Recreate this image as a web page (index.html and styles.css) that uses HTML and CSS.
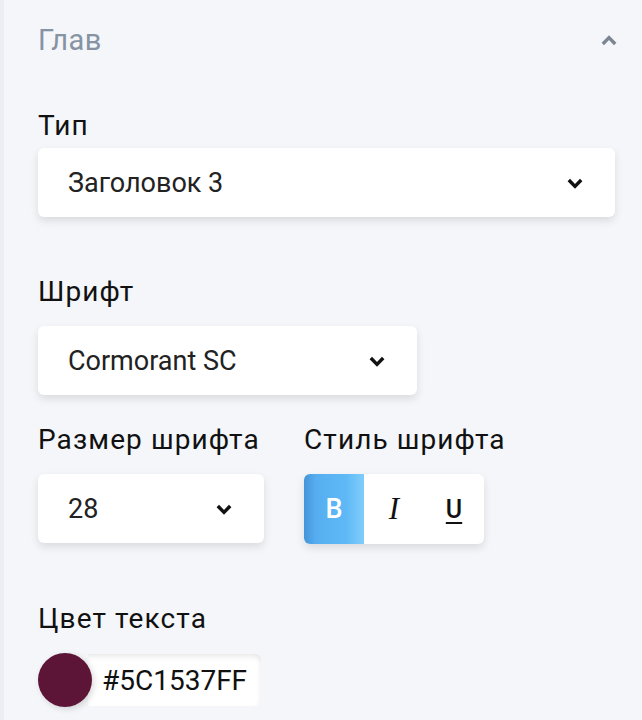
FILE: index.html
```html
<!DOCTYPE html>
<html lang="ru">
<head>
<meta charset="utf-8">
<link rel="stylesheet" href="styles.css">
</head>
<body>
<div class="panel">
  <div class="header">
    <span class="title">Глав</span>
    <svg class="up" width="16" height="11" viewBox="0 0 16 11"><path d="M1.8 9 L8 2.6 L14.2 9" fill="none" stroke="#7d8693" stroke-width="3.4"/></svg>
  </div>

  <div class="field f-type">
    <div class="label tight">Тип</div>
    <div class="select wide">
      <span>Заголовок 3</span>
      <svg class="chev" width="16" height="11" viewBox="0 0 16 11"><path d="M1.8 2 L8 8.4 L14.2 2" fill="none" stroke="#111" stroke-width="3.4"/></svg>
    </div>
  </div>

  <div class="field f-font">
    <div class="label">Шрифт</div>
    <div class="select mid">
      <span>Cormorant SC</span>
      <svg class="chev" width="16" height="11" viewBox="0 0 16 11"><path d="M1.8 2 L8 8.4 L14.2 2" fill="none" stroke="#111" stroke-width="3.4"/></svg>
    </div>
  </div>

  <div class="row">
    <div class="field">
      <div class="label">Размер шрифта</div>
      <div class="select small">
        <span>28</span>
        <svg class="chev" width="16" height="11" viewBox="0 0 16 11"><path d="M1.8 2 L8 8.4 L14.2 2" fill="none" stroke="#111" stroke-width="3.4"/></svg>
      </div>
    </div>
    <div class="field">
      <div class="label">Стиль шрифта</div>
      <div class="styles">
        <div class="sbtn bold active">B</div>
        <div class="sbtn italic">I</div>
        <div class="sbtn under">U</div>
      </div>
    </div>
  </div>

  <div class="field f-color">
    <div class="label">Цвет текста</div>
    <div class="color">
      <div class="swatch"></div>
      <div class="hex">#5C1537FF</div>
    </div>
  </div>
</div>
</body>
</html>
```

FILE: styles.css
```css
html, body {
  margin: 0;
  padding: 0;
  background: #f4f6fa;
  font-family: Roboto, "Noto Sans", sans-serif;
}
body {
  height: 720px;
  overflow: hidden;
  border-left: 4px solid #eceef3;
  box-sizing: border-box;
}
.panel {
  padding: 0 25px 0 34px;
}
.header {
  height: 80px;
  display: flex;
  align-items: center;
  justify-content: space-between;
}
.title {
  font-size: 29px;
  line-height: 32px;
  letter-spacing: 0.5px;
  color: #8593a3;
  margin-top: -1px;
}
.up {
  flex-shrink: 0;
  margin-right: 0;
}
.field {
  display: flex;
  flex-direction: column;
}
.label {
  font-size: 28px;
  line-height: 32px;
  color: #111;
  letter-spacing: 1.1px;
  margin-bottom: 18px;
}
.label.tight {
  margin-bottom: 6px;
}
.f-type { margin-top: 30px; }
.f-font { margin-top: 59px; }
.row {
  display: flex;
  gap: 40px;
  margin-top: 29px;
}
.f-color { margin-top: 59px; }
.select {
  height: 69px;
  background: #fff;
  border-radius: 6px;
  box-shadow: 0 4px 8px rgba(0, 0, 0, 0.11);
  display: flex;
  align-items: center;
  justify-content: space-between;
  padding: 0 32px 0 30px;
  box-sizing: border-box;
  font-size: 27px;
  color: #222;
}
.chev {
  flex-shrink: 0;
  margin-top: 2px;
}
.wide { width: 577px; }
.mid { width: 379px; }
.small { width: 226px; }
.styles {
  display: flex;
  width: 180px;
  height: 70px;
  background: #fff;
  border-radius: 6px;
  box-shadow: 0 4px 8px rgba(0, 0, 0, 0.11);
  overflow: hidden;
}
.sbtn {
  width: 60px;
  display: flex;
  align-items: center;
  justify-content: center;
  font-size: 26px;
  color: #111;
}
.bold {
  font-weight: 500;
  font-size: 27px;
}
.active {
  background: linear-gradient(90deg, #4594d8 0%, #56aef0 20%, #5fb9f6 70%, #80cdfb 100%);
  color: #fff;
}
.italic {
  font-family: "Liberation Serif", serif;
  font-style: italic;
  font-size: 31px;
}
.under {
  text-decoration: underline;
  text-decoration-thickness: 2px;
  text-underline-offset: 4px;
  font-weight: 500;
  font-size: 25px;
}
.color {
  display: flex;
  align-items: center;
}
.swatch {
  width: 54px;
  height: 54px;
  border-radius: 50%;
  background: #5c1537;
  position: relative;
  z-index: 1;
  box-shadow: 2px 2px 6px rgba(0, 0, 0, 0.15);
  flex-shrink: 0;
}
.hex {
  height: 52px;
  width: 173px;
  margin-left: -4px;
  background: #fff;
  border-radius: 0 6px 6px 0;
  box-shadow: inset 0 5px 6px -3px rgba(0, 0, 0, 0.1), inset -4px 0 5px -3px rgba(0, 0, 0, 0.05);
  display: flex;
  align-items: center;
  padding-left: 14px;
  box-sizing: border-box;
  font-size: 28px;
  color: #111;
}
```
